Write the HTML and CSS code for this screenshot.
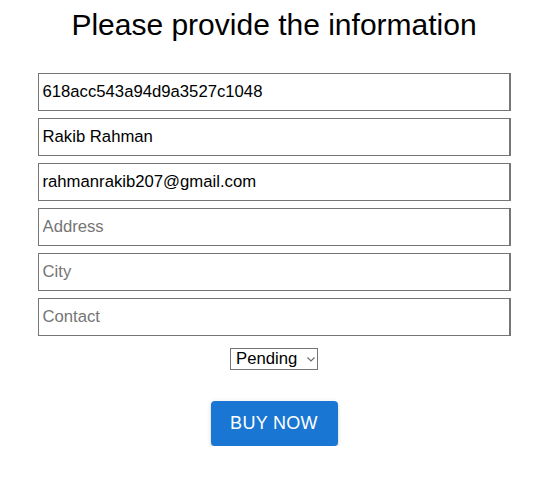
FILE: index.html
```html
<!DOCTYPE html>
<html>
<head>
<meta charset="utf-8">
<link rel="stylesheet" href="styles.css">
</head>
<body>
<main class="page">
  <h1 class="title">Please provide the information</h1>
  <form class="form">
    <div class="fields">
      <input class="field" type="text" value="618acc543a94d9a3527c1048">
      <input class="field" type="text" value="Rakib Rahman">
      <input class="field" type="text" value="rahmanrakib207@gmail.com">
      <input class="field" type="text" placeholder="Address">
      <input class="field" type="text" placeholder="City">
      <input class="field" type="text" placeholder="Contact">
    </div>
    <span class="select-wrap">
      <select class="status">
        <option>Pending</option>
      </select>
      <svg class="chevron" width="8" height="5" viewBox="0 0 8 5" aria-hidden="true">
        <path d="M0.5 0.5 L4 4 L7.5 0.5" fill="none" stroke="#6b6b6b" stroke-width="1.1"/>
      </svg>
    </span>
    <button class="buy" type="button">BUY NOW</button>
  </form>
</main>
</body>
</html>
```

FILE: styles.css
```css
html, body {
  margin: 0;
  padding: 0;
  background: #fff;
}
body {
  font-family: "Liberation Sans", Arial, sans-serif;
  color: #000;
}
.page {
  width: 473px;
  margin: 0 auto;
  padding-left: 1px;
  padding-top: 8px;
}
.title {
  margin: 0;
  font-size: 30px;
  font-weight: 400;
  text-align: center;
  line-height: 34px;
}
.form {
  display: flex;
  flex-direction: column;
  align-items: center;
  margin-top: 31px;
}
.fields {
  display: flex;
  flex-direction: column;
  gap: 7px;
  width: 100%;
}
.field {
  box-sizing: border-box;
  width: 100%;
  height: 38px;
  margin: 0;
  border: 1px solid #767676;
  border-right-width: 2px;
  border-radius: 0;
  padding: 0 4px;
  font-family: "Liberation Sans", Arial, sans-serif;
  font-size: 16.7px;
  color: #000;
  background: #fff;
  outline: none;
}
.field::placeholder {
  color: #757575;
}
.select-wrap {
  position: relative;
  display: block;
  margin-top: 12px;
  width: 88px;
  height: 22px;
}
.status {
  appearance: none;
  -webkit-appearance: none;
  box-sizing: border-box;
  display: block;
  margin: 0;
  width: 88px;
  height: 22px;
  border: 1px solid #767676;
  border-radius: 0;
  background: #fff;
  font-family: "Liberation Sans", Arial, sans-serif;
  font-size: 16.7px;
  line-height: 20px;
  color: #000;
  padding: 0 0 0 5px;
}
.chevron {
  position: absolute;
  left: 77px;
  top: 9px;
  pointer-events: none;
}
.buy {
  margin-top: 31px;
  width: 127px;
  height: 45px;
  border: none;
  border-radius: 4px;
  background: #1976d2;
  color: #fff;
  font-family: "Liberation Sans", Arial, sans-serif;
  font-size: 18px;
  letter-spacing: 0.3px;
  box-shadow: 0 3px 1px -2px rgba(0,0,0,0.2), 0 2px 2px 0 rgba(0,0,0,0.14), 0 1px 5px 0 rgba(0,0,0,0.12);
  cursor: pointer;
}
```
